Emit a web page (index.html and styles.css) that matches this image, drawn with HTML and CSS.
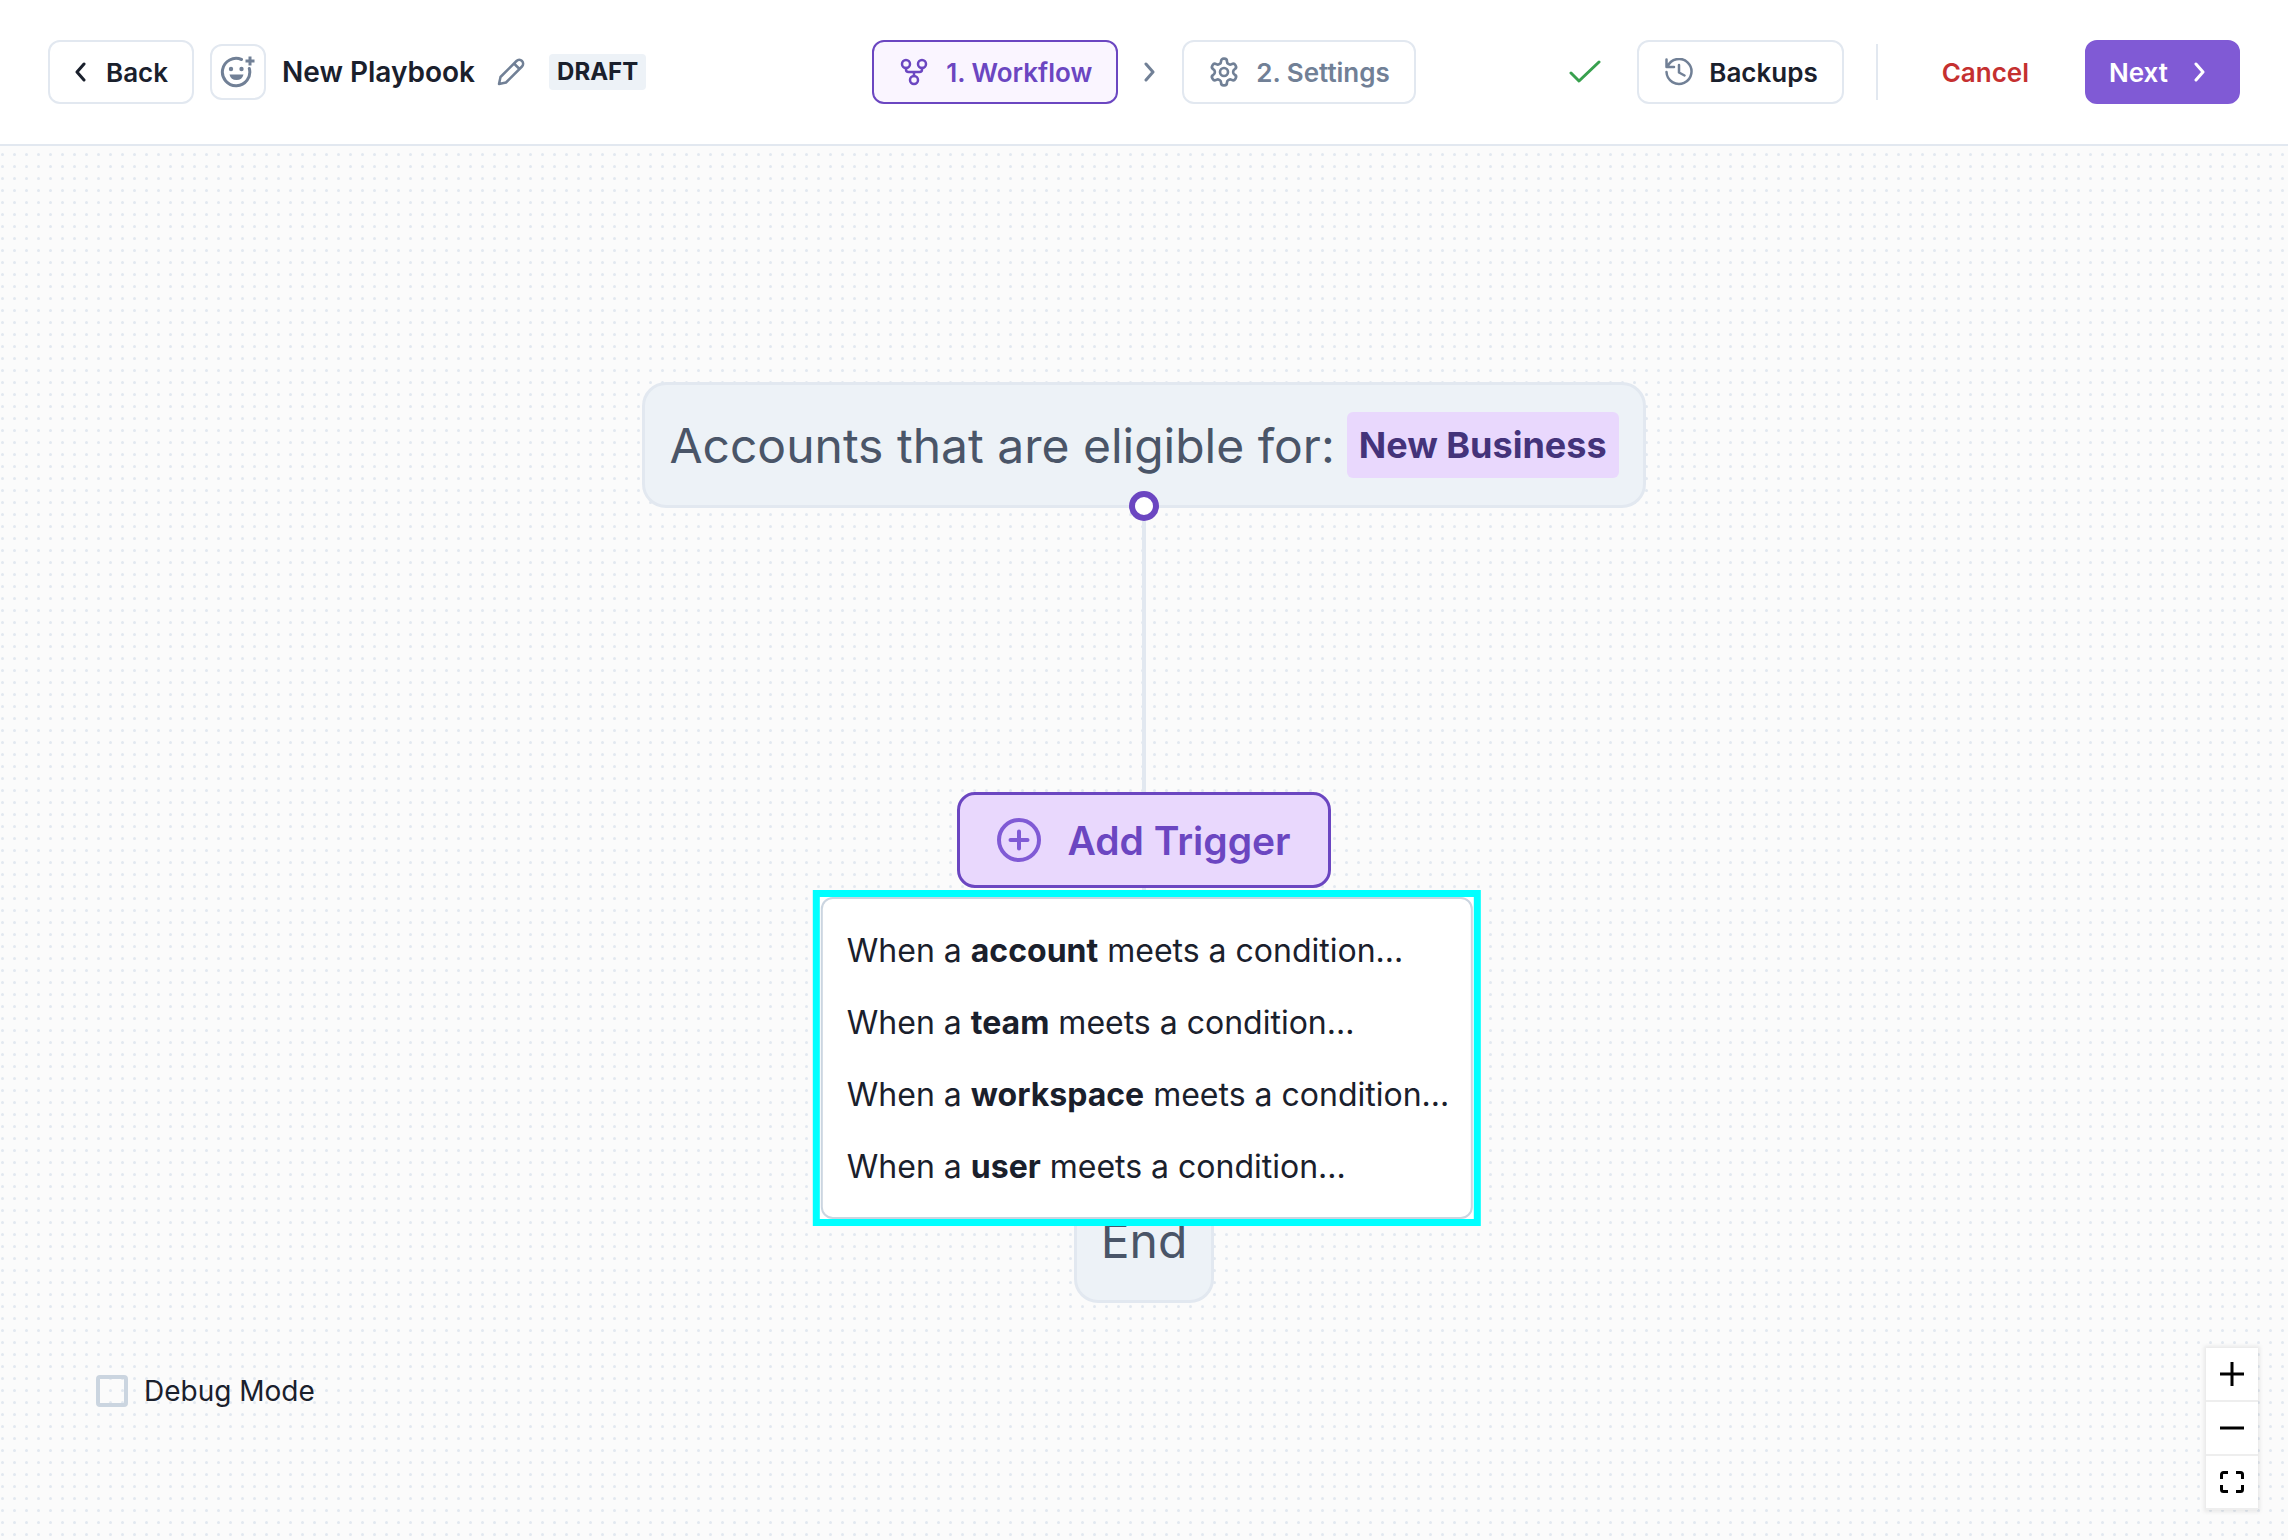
FILE: index.html
```html
<!DOCTYPE html>
<html lang="en">
<head>
  <meta charset="UTF-8" />
  <meta name="viewport" content="width=device-width, initial-scale=1.0" />
  <title>New Playbook</title>
  <link rel="stylesheet" href="styles.css">
</head>
<body>
  <header class="topbar">
    <div class="topbar-left">
      <button type="button" class="btn btn-back">
        <svg class="chevron" viewBox="0 0 12 24"><path d="M10 4 3 12l7 8" /></svg>
        Back
      </button>
      <button type="button" class="emoji-btn" aria-label="Choose emoji">
        <svg viewBox="0 0 36 44">
          <path d="M21.500 9.500A13.700 13.700 0 1 0 29.300 18.500" />
          <path class="plus" d="M30 6.500v9M25.500 11h9" />
          <circle class="fill" cx="11" cy="19" r="2.200" />
          <circle class="fill" cx="21.500" cy="19" r="2.200" />
          <path class="fill" d="M9.500 24.500h14a7.200 7.200 0 0 1-14 0z" />
        </svg>
      </button>
      <h1 class="title">New Playbook</h1>
      <button type="button" class="icon-btn" aria-label="Rename">
        <svg viewBox="0 0 28 28"><path d="M2 26l1.500-7L19.500 3a3.500 3.500 0 0 1 5.500 5.500L9 24.500zM17 5.500l5.500 5.500" /></svg>
      </button>
      <span class="draft">DRAFT</span>
    </div>

    <nav class="steps">
      <button type="button" class="btn step active">
        <svg viewBox="-2 -2 32 32">
          <circle cx="6" cy="6" r="4" /><circle cx="22" cy="6" r="4" /><circle cx="14" cy="22" r="4" />
          <path d="M6 10v1.500a2.500 2.500 0 0 0 2.500 2.500h11a2.500 2.500 0 0 0 2.500-2.500V10M14 14v4" />
        </svg>
        1. Workflow
      </button>
      <svg class="chevron" viewBox="0 0 12 24"><path d="M2 4l7 8-7 8" /></svg>
      <button type="button" class="btn step">
        <svg class="gear" viewBox="0 0 24 24">
          <path d="M12.220 2h-.44a2 2 0 0 0-2 2v.18a2 2 0 0 1-1 1.730l-.43.25a2 2 0 0 1-2 0l-.15-.08a2 2 0 0 0-2.730.73l-.22.38a2 2 0 0 0 .73 2.730l.15.1a2 2 0 0 1 1 1.720v.51a2 2 0 0 1-1 1.740l-.15.09a2 2 0 0 0-.73 2.730l.22.38a2 2 0 0 0 2.730.73l.15-.08a2 2 0 0 1 2 0l.43.25a2 2 0 0 1 1 1.730V20a2 2 0 0 0 2 2h.44a2 2 0 0 0 2-2v-.18a2 2 0 0 1 1-1.730l.43-.25a2 2 0 0 1 2 0l.15.08a2 2 0 0 0 2.730-.73l.22-.39a2 2 0 0 0-.73-2.730l-.15-.08a2 2 0 0 1-1-1.740v-.5a2 2 0 0 1 1-1.740l.15-.09a2 2 0 0 0 .73-2.730l-.22-.38a2 2 0 0 0-2.730-.73l-.15.08a2 2 0 0 1-2 0l-.43-.25a2 2 0 0 1-1-1.730V4a2 2 0 0 0-2-2z" />
          <circle cx="12" cy="12" r="3" />
        </svg>
        2. Settings
      </button>
    </nav>

    <div class="topbar-right">
      <svg class="saved" viewBox="0 0 32 24"><path d="M2 13l8 8L30 2" /></svg>
      <button type="button" class="btn backups">
        <svg viewBox="0 0 28 28"><path d="M2.500 8.500A12.500 12.500 0 1 1 1.500 14M1.500 1.500v7.500H9M14 7v7.500l5.500 3" /></svg>
        Backups
      </button>
      <span class="divider"></span>
      <button type="button" class="btn cancel">Cancel</button>
      <button type="button" class="btn next">
        Next
        <svg class="chevron" viewBox="0 0 12 24"><path d="M2 4l7 8-7 8" /></svg>
      </button>
    </div>
  </header>

  <main class="canvas">
    <svg class="dots" aria-hidden="true">
      <pattern id="dot-pattern" width="12" height="12" patternUnits="userSpaceOnUse">
        <circle cx="2.500" cy="8.500" r="1.500" />
      </pattern>
      <rect width="100%" height="100%" fill="url(#dot-pattern)" />
    </svg>

    <div class="flow">
      <div class="node node-start">
        Accounts that are eligible for: <span class="chip">New Business</span>
        <span class="handle"></span>
      </div>
      <div class="edge"></div>
      <button type="button" class="trigger" aria-haspopup="menu" aria-expanded="true">
        <svg viewBox="0 0 44 44"><circle cx="22" cy="22" r="20" /><path d="M22 13.500v17M13.500 22h17" /></svg>
        Add Trigger
      </button>
      <div class="edge"></div>
      <div class="node node-end">End</div>

      <div class="menu-highlight">
        <div class="menu" role="menu">
          <button type="button" role="menuitem">When a <b>account</b> meets a condition...</button>
          <button type="button" role="menuitem">When a <b>team</b> meets a condition...</button>
          <button type="button" role="menuitem">When a <b>workspace</b> meets a condition...</button>
          <button type="button" role="menuitem">When a <b>user</b> meets a condition...</button>
        </div>
      </div>
    </div>

    <label class="debug"><input type="checkbox" /> Debug Mode</label>

    <div class="controls">
      <button type="button" aria-label="Zoom in"><svg viewBox="0 0 24 24"><path d="M12 0v24M0 12h24" /></svg></button>
      <button type="button" aria-label="Zoom out"><svg viewBox="0 0 24 24"><path d="M0 12h24" /></svg></button>
      <button type="button" aria-label="Fit view"><svg viewBox="0 0 24 24"><path d="M1.500 9V4.500a2 2 0 0 1 2-2H8M16 2.500h4.500a2 2 0 0 1 2 2V9M22.500 15v4.500a2 2 0 0 1-2 2H16M8 21.500H3.500a2 2 0 0 1-2-2V15" /></svg></button>
    </div>
  </main>
</body>
</html>
```
FILE: styles.css
```css
* {
  box-sizing: border-box;
}

body {
  margin: 0;
  min-height: 100vh;
  display: flex;
  flex-direction: column;
  font-family: Inter, sans-serif;
  font-size: 26px;
  color: #1a202c;
  background-color: #fbfbfb;
}

button {
  font: inherit;
  color: inherit;
  background: none;
  border: none;
  padding: 0;
  cursor: pointer;
}

svg {
  display: block;
  flex: none;
  fill: none;
  stroke: currentColor;
  stroke-width: 2.5;
  stroke-linecap: round;
  stroke-linejoin: round;
}

/* top bar */
.topbar {
  display: grid;
  grid-template-columns: 1fr auto 1fr;
  align-items: center;
  height: 146px;
  padding: 0 48px;
  background: white;
  border-bottom: 2px solid #e2e8f0;
}

.topbar-left,
.topbar-right,
.steps {
  display: flex;
  align-items: center;
}

.topbar-left {
  gap: 16px;
}

.topbar-right {
  justify-content: flex-end;
}

.btn {
  display: flex;
  align-items: center;
  height: 64px;
  padding: 0 24px;
  border: 2px solid #e2e8f0;
  border-radius: 12px;
  background: white;
  font-weight: 600;
  white-space: nowrap;
}

.chevron {
  width: 12px;
  height: 24px;
  stroke-width: 3;
}

.btn-back {
  gap: 20px;
}

.emoji-btn {
  display: flex;
  align-items: center;
  justify-content: center;
  width: 56px;
  height: 56px;
  border: 2px solid #e2e8f0;
  border-radius: 12px;
  color: #718096;
}

.emoji-btn svg {
  width: 36px;
  height: 44px;
  stroke-width: 3;
}

.emoji-btn .plus {
  stroke-linecap: butt;
}

.emoji-btn .fill {
  fill: currentColor;
  stroke: none;
}

.title {
  margin: 0;
  font-size: 28px;
  font-weight: 600;
  white-space: nowrap;
}

.icon-btn {
  padding: 0 8px 0 6px;
  color: #718096;
}

.icon-btn svg {
  width: 28px;
  height: 28px;
}

.draft {
  padding: 0 8px;
  border-radius: 4px;
  background: #edf2f7;
  font-size: 24px;
  font-weight: 700;
  line-height: 36px;
}

.steps {
  gap: 26px;
}

.steps > .chevron,
.step {
  color: #718096;
}

.step {
  gap: 16px;
}

.step svg {
  width: 32px;
  height: 32px;
}

.step .gear {
  stroke-width: 2;
}

.step.active {
  color: #6b46c1;
  border-color: #6b46c1;
  background: #faf5ff;
}

.saved {
  width: 32px;
  height: 24px;
  margin-right: 36px;
  color: #38a04e;
  stroke-width: 3;
}

.backups {
  gap: 16px;
  padding-left: 26px;
}

.backups svg {
  width: 28px;
  height: 28px;
  color: #718096;
}

.divider {
  width: 2px;
  height: 56px;
  margin: 0 30px 0 32px;
  background: #e2e8f0;
}

.cancel {
  padding: 0 32px;
  margin-right: 22px;
  border-color: transparent;
  color: #c53030;
}

.next {
  gap: 26px;
  padding: 0 32px 0 22px;
  border-color: #805ad5;
  background: #805ad5;
  color: white;
}

/* canvas */
.canvas {
  position: relative;
  flex: 1;
}

.dots {
  position: absolute;
  inset: 0;
  width: 100%;
  height: 100%;
  stroke: none;
}

.dots circle {
  fill: #e2e8f0;
}

.flow {
  position: relative;
  display: flex;
  flex-direction: column;
  align-items: center;
  padding-top: 236px;
}

.node {
  position: relative;
  display: flex;
  align-items: center;
  height: 126px;
  padding: 0 24px;
  border: 3px solid #e2e8f0;
  border-radius: 24px;
  background: #edf2f7;
  color: #4a5568;
  font-size: 48px;
  white-space: nowrap;
}

.chip {
  margin-left: 12px;
  padding: 0 12px;
  border-radius: 6px;
  background: #e9d8fd;
  color: #44337a;
  font-size: 36px;
  font-weight: 700;
  line-height: 66px;
}

/* sits on the bottom border of the start node */
.handle {
  position: absolute;
  left: 50%;
  bottom: -16px;
  width: 30px;
  height: 30px;
  margin-left: -15px;
  border: 6px solid #6b46c1;
  border-radius: 50%;
  background: white;
}

.edge {
  width: 4px;
  height: 284px;
  background: #e2e8f0;
}

.trigger {
  display: flex;
  align-items: center;
  gap: 26px;
  height: 96px;
  padding: 0 37px;
  border: 3px solid #6b46c1;
  border-radius: 18px;
  background: #e9d8fd;
  color: #6b46c1;
  font-size: 39px;
  font-weight: 600;
}

.trigger svg {
  width: 44px;
  height: 44px;
  color: #805ad5;
  stroke-width: 4;
}

.trigger + .edge {
  height: 289px;
}

.menu-highlight {
  position: absolute;
  top: 744px;
  left: 50%;
  transform: translateX(-50%);
  margin-left: 3px;
  padding: 0 1px;
  border: 7px solid #00ffff;
  background: white;
}

.menu {
  padding: 15px 0;
  border: 2px solid #cbd5e0;
  border-radius: 12px;
  background: white;
}

.menu button {
  display: block;
  width: 100%;
  height: 72px;
  padding: 0 22px 0 24px;
  font-size: 32px;
  text-align: left;
  white-space: nowrap;
}

.debug {
  position: absolute;
  left: 96px;
  bottom: 132px;
  display: flex;
  align-items: center;
  gap: 16px;
  font-size: 28px;
  line-height: 34px;
}

.debug input {
  appearance: none;
  width: 32px;
  height: 32px;
  margin: 0;
  border: 4px solid #cbd5e0;
  border-radius: 4px;
}

.controls {
  position: absolute;
  right: 30px;
  bottom: 30px;
  background: white;
  box-shadow: 0 0 4px 2px rgba(0, 0, 0, 0.08);
}

.controls button {
  display: flex;
  align-items: center;
  justify-content: center;
  width: 52px;
  height: 54px;
  border-bottom: 2px solid #eee;
}

.controls svg {
  width: 24px;
  height: 24px;
  color: black;
  stroke-width: 3;
  stroke-linecap: butt;
}
```
